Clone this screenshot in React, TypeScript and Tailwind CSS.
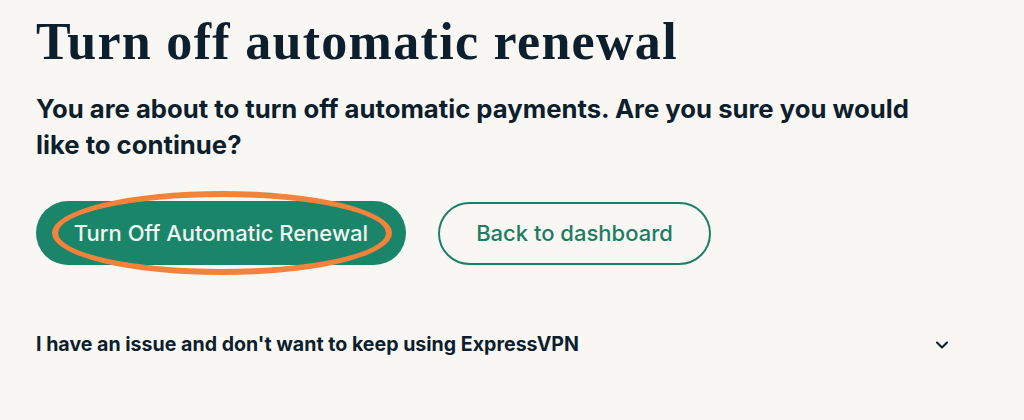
import { ChevronDown } from "lucide-react";

export default function App() {
  return (
    <div className="h-[420px] w-[1024px] overflow-hidden bg-[#f9f7f3] pl-[36px] pr-[72px] text-[#0d1e2d]" style={{ fontFamily: "Inter, 'Liberation Sans', sans-serif" }}>
      <h1 className="pt-[13px] text-[52px] font-bold leading-[58px] tracking-[1.3px]" style={{ fontFamily: "'Liberation Serif', serif" }}>
        Turn off automatic renewal
      </h1>

      <p className="mt-[20px] max-w-[900px] text-[25.7px] font-bold leading-[36px]">
        You are about to turn off automatic payments. Are you sure you would like to continue?
      </p>

      <div className="mt-[38px] flex items-center gap-[32px]">
        <div className="relative">
          <button className="h-[64px] w-[370px] rounded-full bg-[#1a8568] text-[22px] font-medium text-[#eef7f2]">
            Turn Off Automatic Renewal
          </button>
          {/* annotation ring */}
          <div className="pointer-events-none absolute left-[16px] top-[-10px] h-[84px] w-[340px] rounded-[50%] border-[6px] border-[#f5823b]" />
        </div>
        <button className="h-[63px] w-[273px] rounded-full border-2 border-[#1f7f66] text-[22px] font-medium text-[#1d7c62]">
          Back to dashboard
        </button>
      </div>

      <div className="mt-[65px] flex items-center justify-between">
        <span className="text-[19.6px] font-bold">I have an issue and don't want to keep using ExpressVPN</span>
        <ChevronDown className="h-[20px] w-[20px]" strokeWidth={2.5} />
      </div>
    </div>
  );
}
